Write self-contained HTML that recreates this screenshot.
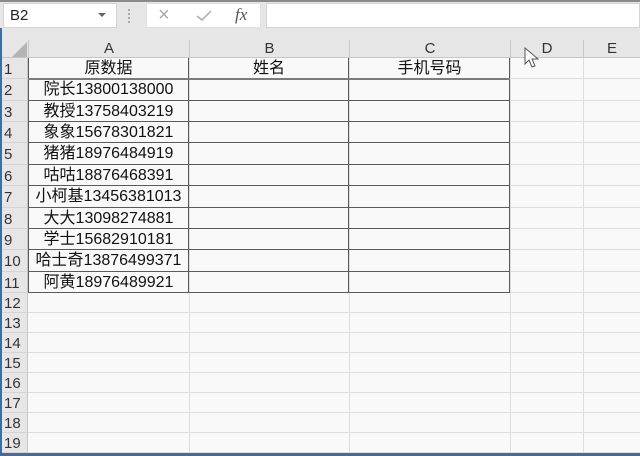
<!DOCTYPE html>
<html><head><meta charset="utf-8"><style>
*{margin:0;padding:0;box-sizing:border-box}
body{width:640px;height:456px;overflow:hidden;background:#fff;font-family:"Liberation Sans","Noto Sans CJK SC",sans-serif;position:relative}
.abs{position:absolute}
</style></head><body>
<div class="abs" style="left:0;top:0;width:640px;height:456px;background:#f9f9f9"></div>
<div class="abs" style="left:0;top:0;width:640px;height:40px;background:#e6e6e6;border-top:2px solid #8a8a8a"></div>
<div class="abs" style="left:3px;top:3px;width:114px;height:25px;background:#fff;border:1px solid #d4d4d4;font-size:15px;line-height:23px;padding-left:6px;color:#222">B2</div>
<div class="abs" style="left:98px;top:13px;width:0;height:0;border-left:4px solid transparent;border-right:4px solid transparent;border-top:4px solid #666"></div>
<div class="abs" style="left:128px;top:9px;width:2px;height:14px;border-left:2px dotted #aaa"></div>
<div class="abs" style="left:146px;top:3px;width:115px;height:25px;background:#fff;border:1px solid #e0e0e0"></div>
<div class="abs" style="left:158px;top:4px;font-size:20px;color:#aaa">×</div>
<svg class="abs" style="left:196px;top:10px" width="16" height="12"><path d="M1 6 L6 10 L15 1" stroke="#aaa" stroke-width="1.5" fill="none"/></svg>
<div class="abs" style="left:235px;top:5px;font-size:17px;font-style:italic;font-family:'Liberation Serif',serif;color:#555">fx</div>
<div class="abs" style="left:266px;top:3px;width:374px;height:25px;background:#fff;border:1px solid #d4d4d4"></div>
<div class="abs" style="left:0;top:40px;width:640px;height:18px;background:#e6e6e6;border-bottom:1px solid #c6c6c6"></div>
<svg class="abs" style="left:12px;top:42px" width="16" height="15"><path d="M15 0 L15 15 L0 15 Z" fill="#b4b4b4"/></svg>
<div id="cols"></div>
<div id="grid"></div>
<div class="abs" style="left:0;top:28px;width:2px;height:428px;background:#3a6ea5"></div>
<div class="abs" style="left:0;top:453px;width:640px;height:3px;background:#3a6ea5"></div>
<svg class="abs" style="left:524px;top:47px" width="16" height="22"><path d="M1 1 L1 17 L5 13 L8 20 L11 19 L8 12 L14 12 Z" fill="#fff" stroke="#555" stroke-width="1"/></svg>
<script>
var cx=[28,189,349,510,583,640],names=['A','B','C','D','E'];
var h='';
for(var i=0;i<5;i++){h+='<div class="abs" style="left:'+cx[i]+'px;top:40px;width:'+(cx[i+1]-cx[i])+'px;height:18px;text-align:center;font-size:15px;line-height:18px;color:#333;border-left:1px solid #c6c6c6">'+names[i]+'</div>';}
document.getElementById('cols').innerHTML=h;
var data=[['原数据','姓名','手机号码'],['院长13800138000'],['教授13758403219'],['象象15678301821'],['猪猪18976484919'],['咕咕18876468391'],['小柯基13456381013'],['大大13098274881'],['学士15682910181'],['哈士奇13876499371'],['阿黄18976489921']];
var g='',y=58;var ys=[];
for(var r=1;r<=19;r++){var rh=r<=11?21.36:20;ys.push([y,rh]);
g+='<div class="abs" style="left:0;top:'+y+'px;width:28px;height:'+rh+'px;background:#e6e6e6;border-right:1px solid #c6c6c6;border-bottom:1px solid #d4d4d4;font-size:15px;line-height:'+(rh+2)+'px;padding-left:4px;color:#333">'+r+'</div>';
g+='<div class="abs" style="left:28px;top:'+(y+rh-1)+'px;width:612px;height:1px;background:#dedede"></div>';
y+=rh;}
for(var i=1;i<5;i++)g+='<div class="abs" style="left:'+cx[i]+'px;top:58px;width:1px;height:395px;background:#dedede"></div>';
var bot=ys[10][0]+ys[10][1];
for(var r=0;r<11;r++){var yy=ys[r][0]+ys[r][1];g+='<div class="abs" style="left:28px;top:'+(yy-1)+'px;width:482px;height:1px;background:#5a5a5a"></div>';}
for(var i=0;i<4;i++)g+='<div class="abs" style="left:'+(cx[i]-(i==0?0:1))+'px;top:58px;width:1px;height:'+(bot-58)+'px;background:#5a5a5a"></div>';
g+='<div class="abs" style="left:28px;top:78px;width:482px;height:2px;background:#7a7a7a"></div>';
for(var r=0;r<11;r++){for(var c=0;c<data[r].length;c++){g+='<div class="abs" style="left:'+cx[c]+'px;top:'+ys[r][0]+'px;width:'+(cx[c+1]-cx[c])+'px;height:'+ys[r][1]+'px;text-align:center;font-size:16px;line-height:'+ys[r][1]+'px;color:#111">'+data[r][c]+'</div>';}}
document.getElementById('grid').innerHTML=g;
</script>
</body></html>
